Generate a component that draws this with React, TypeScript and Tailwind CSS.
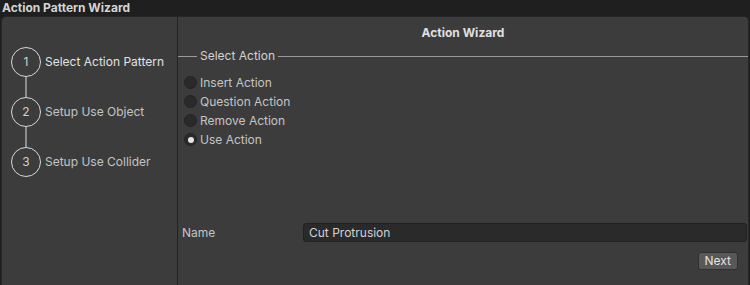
import React from "react";

const font = { fontFamily: "Inter, 'Noto Sans', sans-serif" };

function Step({ n, label, active }: { n: number; label: string; active?: boolean }) {
  return (
    <div className="flex items-center h-[30px]">
      <div className="w-[30px] h-[30px] rounded-full border-[1.5px] border-[#d8d8d8] flex items-center justify-center text-[12px] text-[#d0d0d0] box-border">
        {n}
      </div>
      <div className={"ml-[4px] text-[12px] " + (active ? "text-[#e2e2e2]" : "text-[#c4c4c4]")}>{label}</div>
    </div>
  );
}

function Connector() {
  return <div className="ml-[14px] w-[2px] h-[20px] bg-[#8e8e8e]" />;
}

function Radio({ label, checked }: { label: string; checked?: boolean }) {
  return (
    <div className="flex items-center h-[19px]">
      <div className="w-[13px] h-[13px] rounded-full bg-[#2a2a2a] border border-[#232323] flex items-center justify-center box-border">
        {checked && <div className="w-[6px] h-[6px] rounded-full bg-[#e6e6e6]" />}
      </div>
      <span className="ml-[3px] text-[12px] text-[#c4c4c4]">{label}</span>
    </div>
  );
}

export default function App() {
  return (
    <div className="w-[750px] h-[285px] bg-[#1f1f1f] flex flex-col overflow-hidden" style={font}>
      <div className="h-[16px] flex items-center pl-[2px] text-[12px] font-bold text-[#d4d4d4] leading-none">
        Action Pattern Wizard
      </div>
      <div className="flex-1 mx-[1px] flex bg-[#3c3c3c] rounded-t-[5px] border border-b-0 border-[#262626] overflow-hidden">
        <div className="w-[176px] border-r border-[#232323] pt-[30px] pl-[9px] flex flex-col">
          <Step n={1} label="Select Action Pattern" active />
          <Connector />
          <Step n={2} label="Setup Use Object" />
          <Connector />
          <Step n={3} label="Setup Use Collider" />
        </div>
        <div className="flex-1 flex flex-col">
          <div className="h-[31px] flex items-center justify-center text-[12px] font-bold text-[#e0e0e0]">
            Action Wizard
          </div>
          <div className="flex items-center h-[16px]">
            <div className="w-[19px] h-[1px] bg-[#9a9a9a]" />
            <span className="px-[3px] text-[12px] text-[#d2d2d2]">Select Action</span>
            <div className="flex-1 h-[1px] bg-[#9a9a9a]" />
          </div>
          <div className="pl-[6px] pt-[9px] flex flex-col">
            <Radio label="Insert Action" />
            <Radio label="Question Action" />
            <Radio label="Remove Action" />
            <Radio label="Use Action" checked />
          </div>
          <div className="flex-1" />
          <div className="flex items-center h-[19px] pl-[4px] pr-[1px]">
            <span className="w-[121px] text-[12px] text-[#c4c4c4]">Name</span>
            <div className="flex-1 h-[19px] bg-[#2a2a2a] border border-[#212121] rounded-[3px] flex items-center pl-[5px] text-[12px] text-[#d2d2d2] box-border">
              Cut Protrusion
            </div>
          </div>
          <div className="flex justify-end pr-[10px] pt-[10px] pb-[15px]">
            <div className="h-[18px] px-[6px] bg-[#585858] border border-[#303030] rounded-[3px] flex items-center text-[12px] text-[#e2e2e2] box-border">
              Next
            </div>
          </div>
        </div>
      </div>
    </div>
  );
}
